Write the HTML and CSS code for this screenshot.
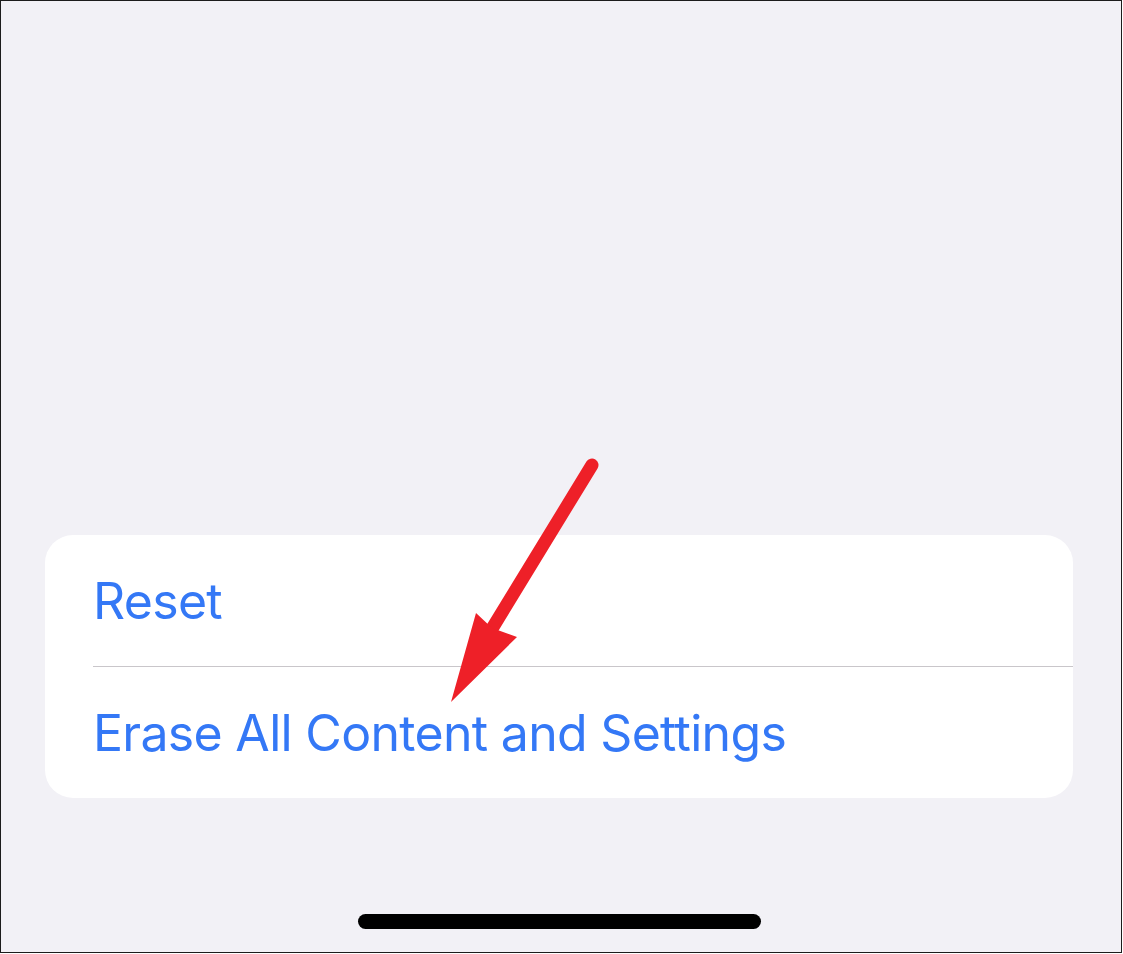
FILE: index.html
```html
<!DOCTYPE html>
<html lang="en">
<head>
    <meta charset="UTF-8">
    <meta name="viewport" content="width=device-width, initial-scale=1.0">
    <title>Reset</title>
    <link rel="stylesheet" href="styles.css">
</head>
<body>
    <div class="screen">
        <div class="group">
            <div class="row">Reset</div>
            <div class="divider"></div>
            <div class="row">Erase All Content and Settings</div>
        </div>

        <div class="home-bar"></div>

        <!-- annotation arrow -->
        <svg class="arrow" width="1122" height="953" viewBox="0 0 1122 953">
            <line x1="592" y1="465" x2="490" y2="632" stroke="#ee2028" stroke-width="13" stroke-linecap="round"/>
            <polygon points="451,702 476,613 492,628 517,637" fill="#ee2028"/>
        </svg>
    </div>
</body>
</html>
```

FILE: styles.css
```css
body {
    margin: 0;
    padding: 0;
    background: #ffffff;
    font-family: Inter, 'Noto Sans', sans-serif;
}
.screen {
    position: relative;
    width: 1122px;
    height: 953px;
    box-sizing: border-box;
    border: 1px solid #1c1c1c;
    background: #f2f1f6;
    padding: 534px 48px 0 44px;
    display: flex;
    flex-direction: column;
}
.group {
    background: #ffffff;
    border-radius: 28px;
    padding-left: 48px;
}
.row {
    height: 131px;
    display: flex;
    align-items: center;
    color: #3478f6;
    font-size: 50px;
    letter-spacing: -0.7px;
}
.divider {
    height: 1px;
    background: #c9c6ca;
}
.home-bar {
    align-self: center;
    width: 403px;
    height: 15px;
    margin-top: 116px;
    background: #000000;
    border-radius: 8px;
}
.arrow {
    position: absolute;
    left: -1px;
    top: -1px;
}
```
